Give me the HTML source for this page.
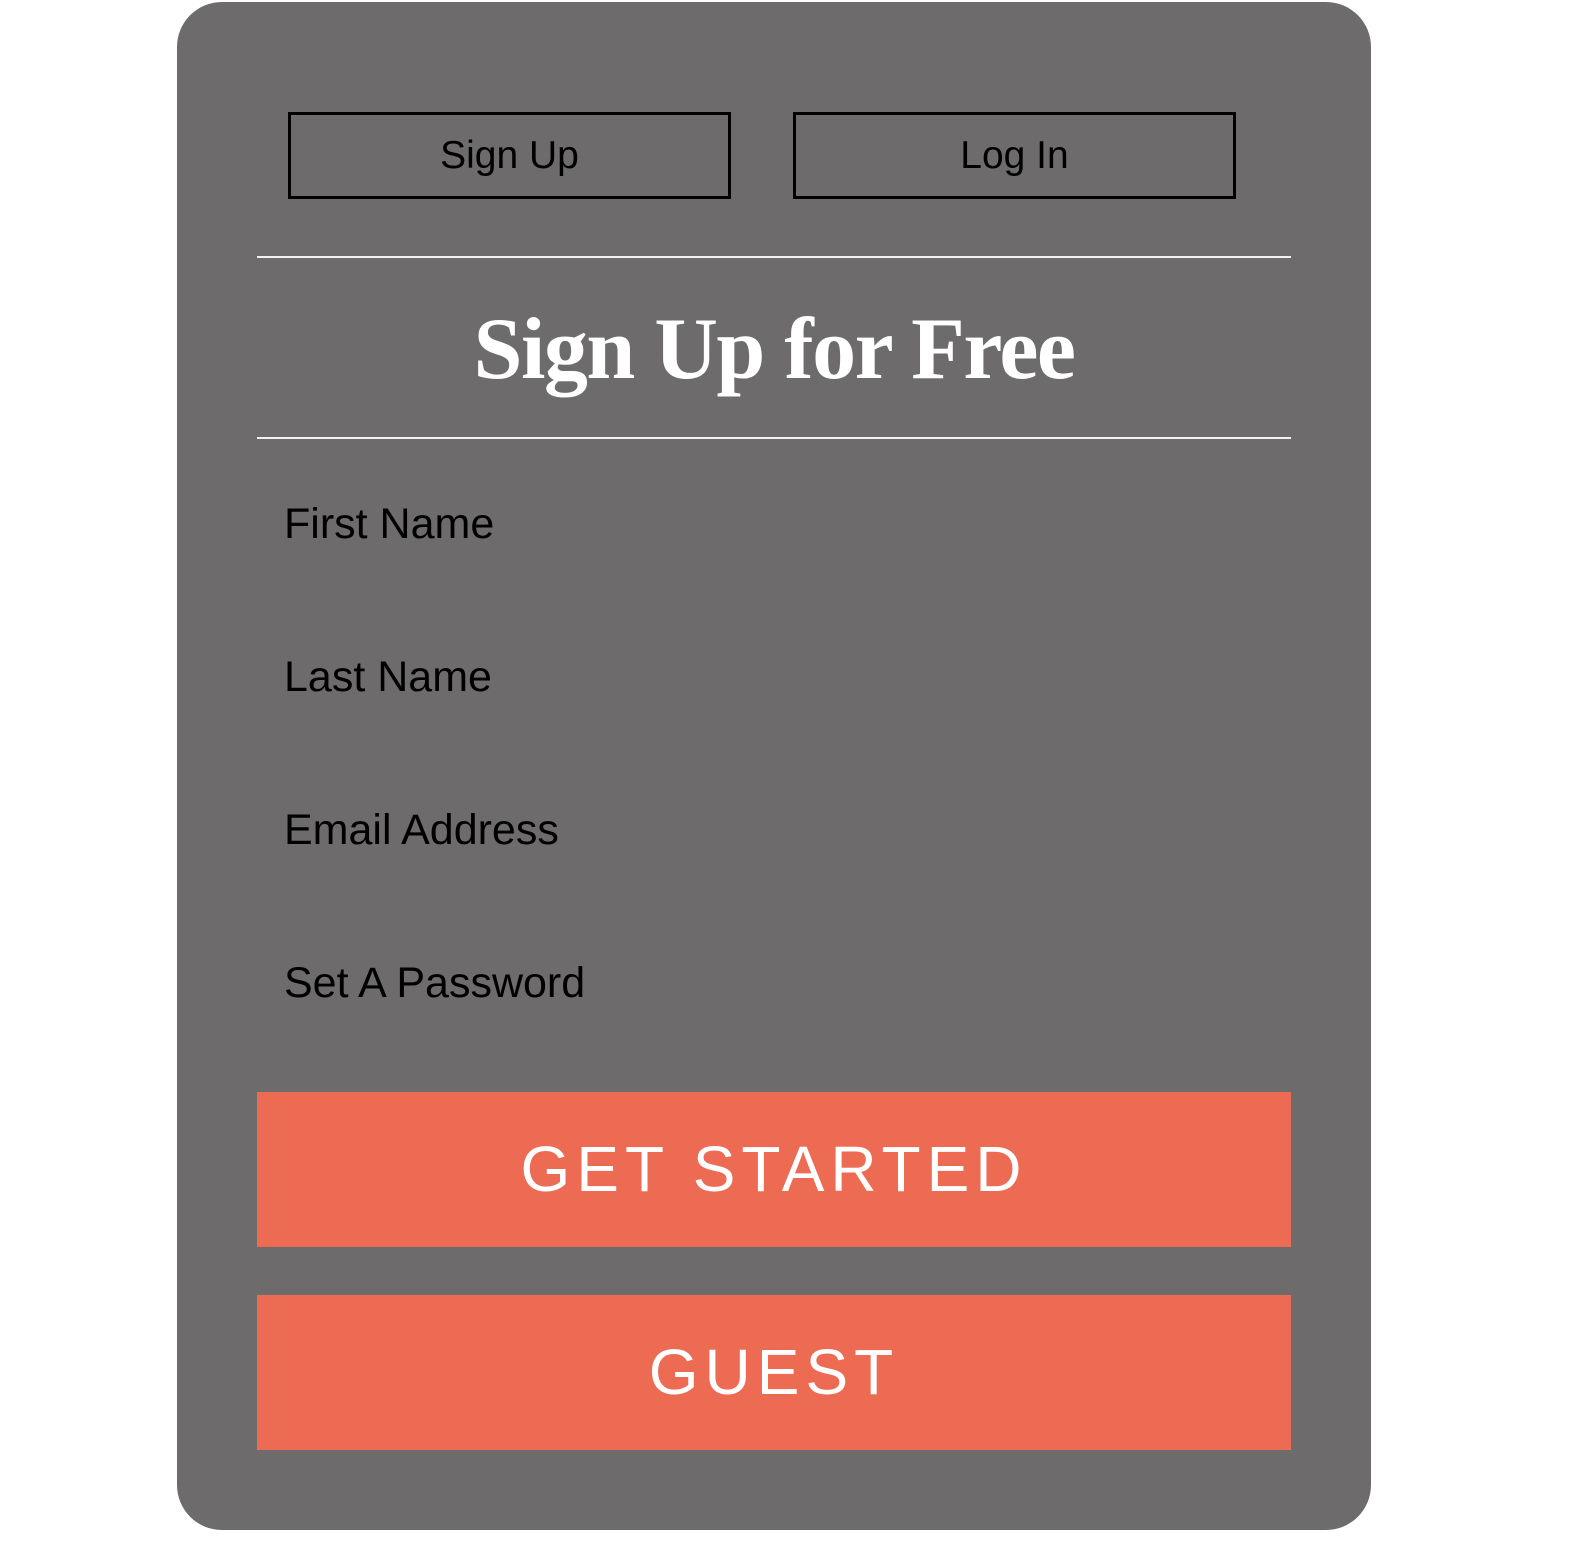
<!DOCTYPE html>
<html><head><style>
html,body{margin:0;padding:0;background:#fff;width:1576px;height:1554px;overflow:hidden;font-family:"Liberation Sans",Arial,sans-serif}
.card{position:absolute;left:177px;top:2px;width:1194px;height:1528px;background:#6d6b6c;border-radius:45px}
.tab{position:absolute;top:112px;height:81px;border:3px solid #000;box-sizing:content-box;font-size:39px;line-height:81px;text-align:center;color:#000}
.line{position:absolute;left:257px;width:1034px;height:2px;background:#f2f2f2}
h1{position:absolute;left:257px;width:1034px;top:300px;margin:0;text-align:center;font-family:"Liberation Serif",serif;font-weight:bold;font-size:88px;line-height:100px;color:#fff;letter-spacing:-1.5px}
.lbl{position:absolute;left:284px;font-size:43px;color:#000;line-height:50px}
.btn{position:absolute;left:257px;width:1034px;height:155px;background:#ed6a53;color:#fff;font-size:64px;letter-spacing:6px;text-align:center;line-height:155px}
</style></head><body>
<div class="card"></div>
<div class="tab" style="left:288px;width:437px">Sign Up</div>
<div class="tab" style="left:793px;width:437px">Log In</div>
<div class="line" style="top:256px"></div>
<h1>Sign Up for Free</h1>
<div class="line" style="top:437px"></div>
<div class="lbl" style="top:499px">First Name</div>
<div class="lbl" style="top:652px">Last Name</div>
<div class="lbl" style="top:805px">Email Address</div>
<div class="lbl" style="top:958px">Set A Password</div>
<div class="btn" style="top:1092px">GET STARTED</div>
<div class="btn" style="top:1295px">GUEST</div>
</body></html>
